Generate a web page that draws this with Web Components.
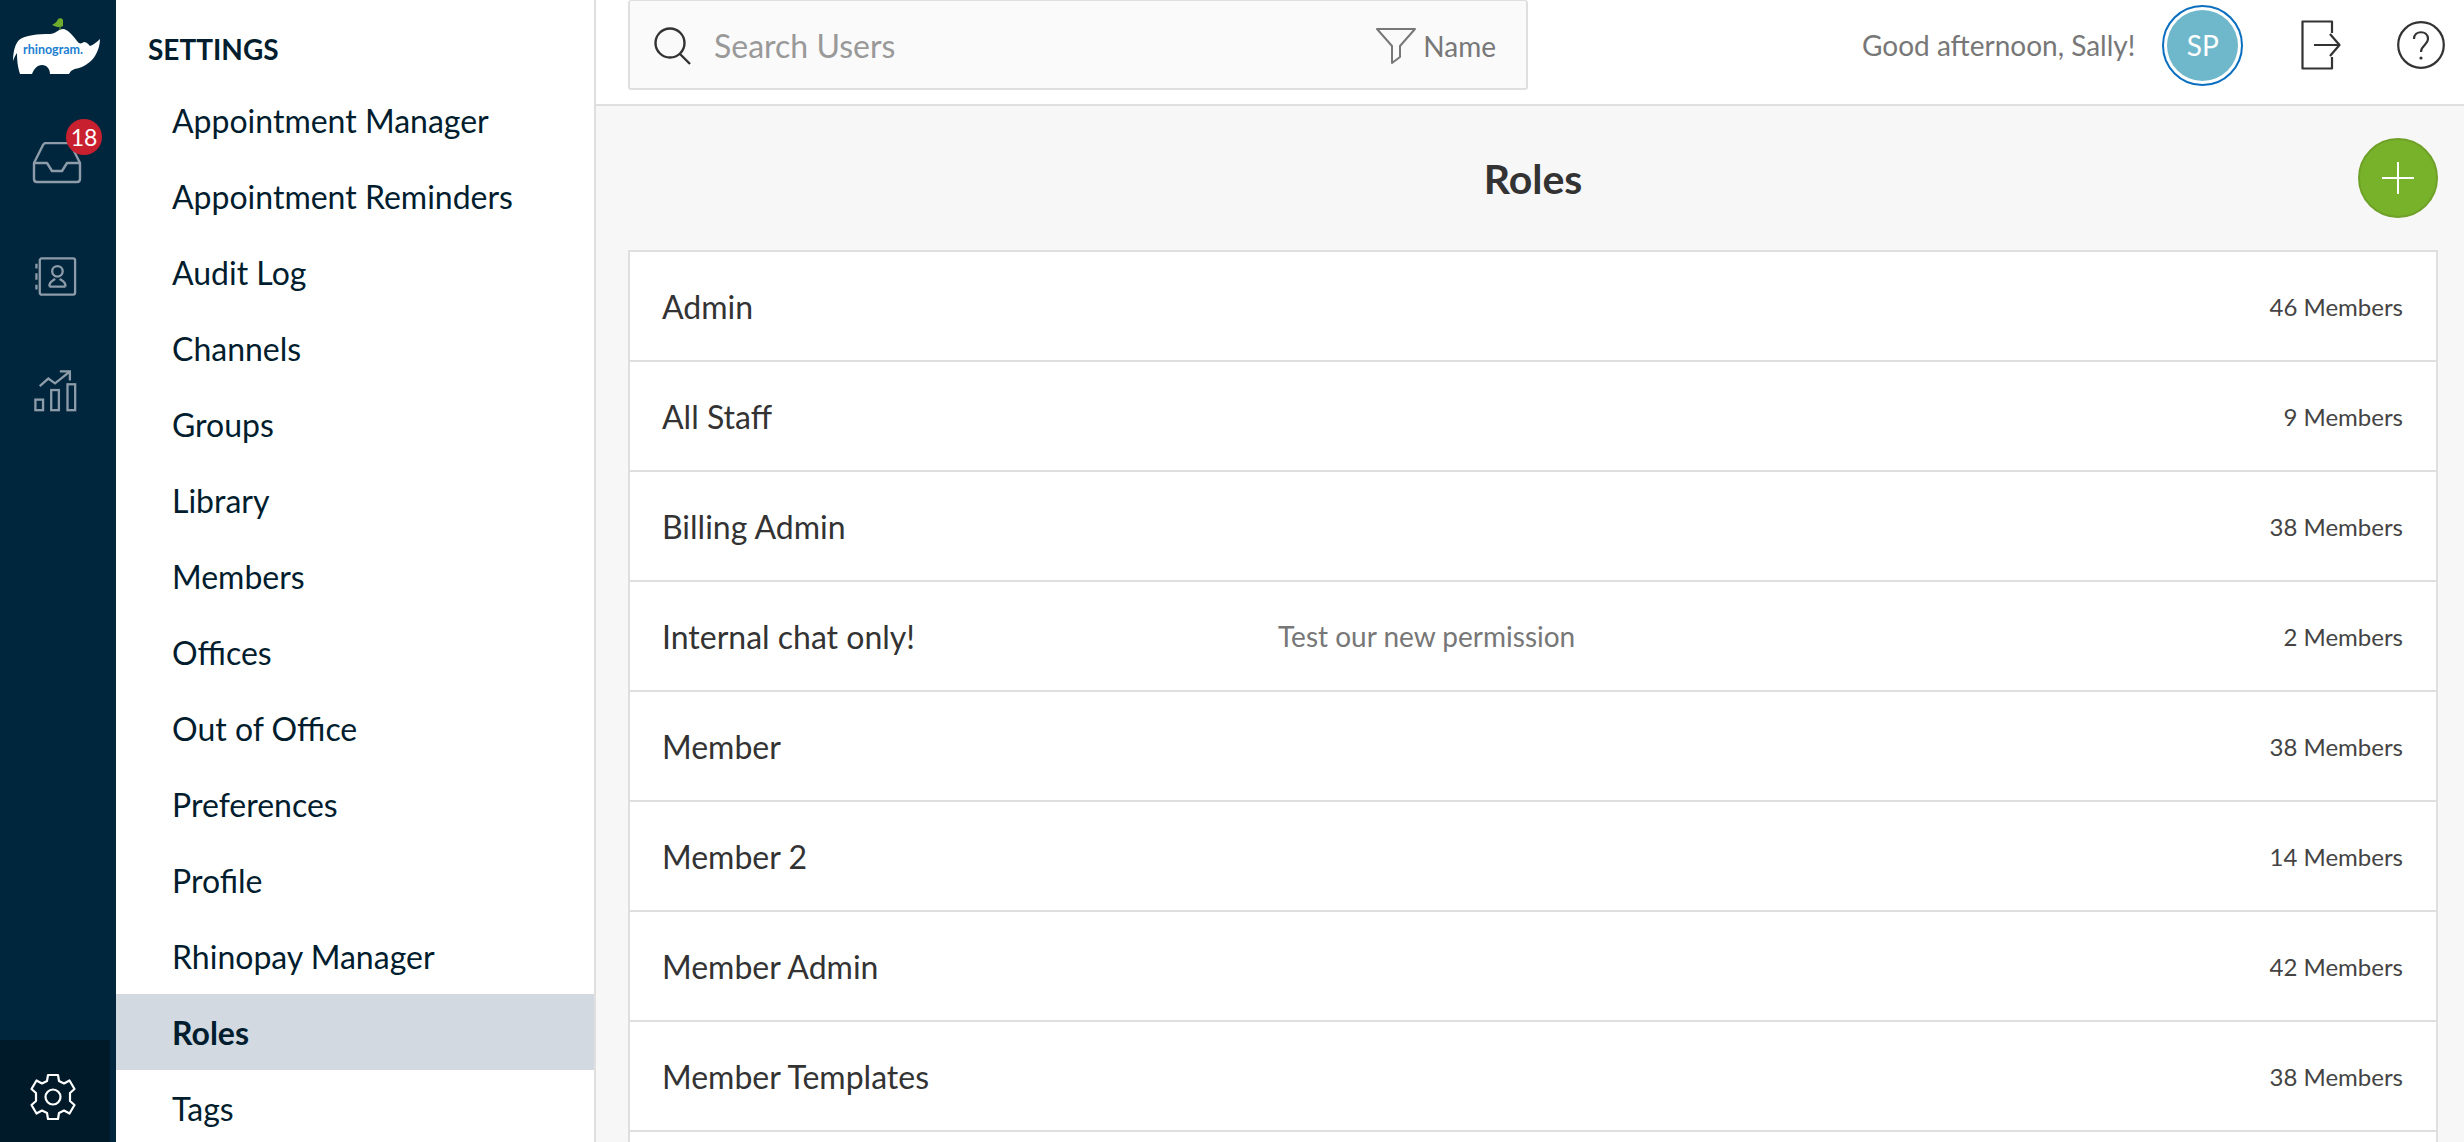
<!DOCTYPE html>
<html>
<head>
<meta charset="utf-8">
<style>
  html, body { margin: 0; height: 100%; overflow: hidden; }
  body { font-family: Lato, "Open Sans", sans-serif; }
</style>
</head>
<body>
<rh-app>
  <rh-rail slot="rail"></rh-rail>
  <rh-settings-nav slot="nav" heading="SETTINGS">
    <rh-nav-item>Appointment Manager</rh-nav-item>
    <rh-nav-item>Appointment Reminders</rh-nav-item>
    <rh-nav-item>Audit Log</rh-nav-item>
    <rh-nav-item>Channels</rh-nav-item>
    <rh-nav-item>Groups</rh-nav-item>
    <rh-nav-item>Library</rh-nav-item>
    <rh-nav-item>Members</rh-nav-item>
    <rh-nav-item>Offices</rh-nav-item>
    <rh-nav-item>Out of Office</rh-nav-item>
    <rh-nav-item>Preferences</rh-nav-item>
    <rh-nav-item>Profile</rh-nav-item>
    <rh-nav-item>Rhinopay Manager</rh-nav-item>
    <rh-nav-item active>Roles</rh-nav-item>
    <rh-nav-item>Tags</rh-nav-item>
  </rh-settings-nav>
  <rh-topbar slot="top"></rh-topbar>
  <rh-roles slot="main">
    <rh-role-row members="46 Members">Admin</rh-role-row>
    <rh-role-row members="9 Members">All Staff</rh-role-row>
    <rh-role-row members="38 Members">Billing Admin</rh-role-row>
    <rh-role-row members="2 Members" note="Test our new permission">Internal chat only!</rh-role-row>
    <rh-role-row members="38 Members">Member</rh-role-row>
    <rh-role-row members="14 Members">Member 2</rh-role-row>
    <rh-role-row members="42 Members">Member Admin</rh-role-row>
    <rh-role-row members="38 Members">Member Templates</rh-role-row>
    <rh-role-row></rh-role-row>
  </rh-roles>
</rh-app>

<script>
class RhApp extends HTMLElement {
    constructor() {
        super();
        this._root = this.attachShadow({ mode: "open" });
        this._root.innerHTML = `
            <style>
                :host {
                    display: grid;
                    grid-template-columns: 116px 480px 1fr;
                    grid-template-rows: 106px 1fr;
                    height: 1142px;
                    overflow: hidden;
                }
                .rail { grid-row: 1 / 3; min-height: 0; display: flex; }
                .nav { grid-row: 1 / 3; min-height: 0; display: flex; }
                .main { min-height: 0; display: flex; }
            </style>
            <div class="rail"><slot name="rail"></slot></div>
            <div class="nav"><slot name="nav"></slot></div>
            <div><slot name="top"></slot></div>
            <div class="main"><slot name="main"></slot></div>
        `;
    }
}

class RhRail extends HTMLElement {
    constructor() {
        super();
        this._root = this.attachShadow({ mode: "open" });
        this._root.innerHTML = `
            <style>
                :host {
                    display: flex;
                    flex-direction: column;
                    width: 116px;
                    background: #00263e;
                    color: #8d9ca8;
                }
                .logo { position: relative; height: 90px; flex: none; }
                .logo svg { display: block; }
                .logo span {
                    position: absolute;
                    left: 23px;
                    top: 41px;
                    font: 700 12.5px/18px Lato, sans-serif;
                    color: #1c7fd0;
                }
                .items { flex: 1; display: flex; flex-direction: column; align-items: flex-start; }
                .item { position: relative; display: block; height: 50px; margin-left: 32px; }
                .inbox { margin-top: 52px; }
                .contacts { margin-top: 64px; margin-left: 35px; }
                .stats { margin-top: 63px; margin-left: 33px; }
                .badge {
                    position: absolute;
                    left: 34px;
                    top: -23px;
                    width: 36px;
                    height: 36px;
                    border-radius: 50%;
                    background: #c8202f;
                    color: #fff;
                    font-size: 23px;
                    line-height: 36px;
                    text-align: center;
                }
                .gear {
                    flex: none;
                    width: 110px;
                    height: 102px;
                    background: #001a29;
                    display: flex;
                    align-items: center;
                    justify-content: center;
                    padding: 12px 4px 0 0;
                    box-sizing: border-box;
                    color: #fff;
                }
            </style>
            <div class="logo">
                <svg width="116" height="90" viewBox="0 0 116 90">
                    <path fill="#fff" d="M13 61 C13 52 15 44 19 40 C25 35 38 34 50 34 C55 34 59 29 63 29 C67 29 72 34 77 41 C79 44 81 44 84 42 C87 42 89 45 90 46 C93 45 97 42 100 39 C100 45 98 51 95 56 C91 62 85 66 79 68 C74 69 71 70 69 74 L50 74 C50 69 47 65 42 65 C37 65 34 69 32 74 L20 74 C18 68 17 62 17 53 C15 56 14 58 13 61 Z"/>
                    <path fill="#6fae2c" d="M52 25 C55 23 57 22 58 19 C60 18 62 18 63 20 L63 26 C60 28 56 27 52 25 Z"/>
                    <path stroke="#6fae2c" stroke-width="1" d="M60 27 L60 30"/>
                </svg>
                <span>rhinogram.</span>
            </div>
            <div class="items">
                <div class="item inbox">
                    <svg width="50" height="42" viewBox="0 0 50 42" fill="none" stroke="currentColor" stroke-width="2.4" stroke-linejoin="round">
                        <path d="M2 21 L11 3 Q12 1 14 1 L36 1 Q38 1 39 3 L48 21"/>
                        <path d="M2 21 L2 37 Q2 40 5 40 L45 40 Q48 40 48 37 L48 21 L35 21 L30 29 L20 29 L15 21 Z"/>
                    </svg>
                    <span class="badge">18</span>
                </div>
                <div class="item contacts">
                    <svg width="42" height="42" viewBox="0 0 44 42" fill="none" stroke="currentColor" stroke-width="2.4" stroke-linejoin="round">
                        <rect x="5" y="1.5" width="37" height="38" rx="2"/>
                        <path d="M1.5 7 V12 M1.5 17 V24 M1.5 29 V34"/>
                        <circle cx="23.5" cy="15" r="5.5"/>
                        <path d="M15 31 C15 25 19 25 21 23 M32 31 C32 25 28 25 26 23 M15 31 H32"/>
                    </svg>
                </div>
                <div class="item stats">
                    <svg width="46" height="44" viewBox="0 0 48 44" fill="none" stroke="currentColor" stroke-width="2.4">
                        <rect x="2.5" y="31" width="8" height="11"/>
                        <rect x="19" y="21" width="8" height="21"/>
                        <rect x="36" y="15" width="8" height="27"/>
                        <path d="M7 17 L16 9 L23 14 L38 2 M28 1.5 H38.5 V11"/>
                    </svg>
                </div>
            </div>
            <div class="gear">
                <svg width="48" height="48" viewBox="0 0 48 48" fill="none" stroke="currentColor" stroke-width="2.2" stroke-linejoin="round">
                    <path d="M19 2 H29 L30 8 L35 10.5 L40.5 7.5 L45.5 16 L41 20 V28 L45.5 32 L40.5 40.5 L35 37.5 L30 40 L29 46 H19 L18 40 L13 37.5 L7.5 40.5 L2.5 32 L7 28 V20 L2.5 16 L7.5 7.5 L13 10.5 L18 8 Z"/>
                    <circle cx="24" cy="24" r="7.5"/>
                </svg>
            </div>
        `;
    }
}

class RhSettingsNav extends HTMLElement {
    constructor() {
        super();
        this._root = this.attachShadow({ mode: "open" });
        this._root.innerHTML = `
            <style>
                :host {
                    display: block;
                    flex: 1;
                    background: #fff;
                    border-right: 2px solid #dfdfdf;
                    overflow: hidden;
                    color: #011d2e;
                }
                h2 {
                    margin: 0;
                    height: 82px;
                    padding: 32px 0 0 32px;
                    box-sizing: border-box;
                    font-size: 28px;
                    line-height: 34px;
                    font-weight: 700;
                }
            </style>
            <h2></h2>
            <slot></slot>
        `;
    }
    connectedCallback() {
        this._root.querySelector("h2").textContent = this.getAttribute("heading");
    }
}

class RhNavItem extends HTMLElement {
    constructor() {
        super();
        this._root = this.attachShadow({ mode: "open" });
        this._root.innerHTML = `
            <style>
                :host {
                    display: flex;
                    align-items: center;
                    height: 76px;
                    padding-left: 56px;
                    font-size: 32px;
                }
                :host([active]) {
                    background: #d2d9e0;
                    font-weight: 700;
                }
            </style>
            <slot></slot>
        `;
    }
}

class RhTopbar extends HTMLElement {
    constructor() {
        super();
        this._root = this.attachShadow({ mode: "open" });
        this._root.innerHTML = `
            <style>
                :host {
                    display: flex;
                    align-items: flex-start;
                    box-sizing: border-box;
                    height: 106px;
                    background: #fff;
                    border-bottom: 2px solid #dfdfdf;
                    padding-left: 32px;
                }
                .search {
                    display: flex;
                    align-items: center;
                    box-sizing: border-box;
                    width: 900px;
                    height: 90px;
                    background: #fafafa;
                    border: 2px solid #dfdfdf;
                    border-top-width: 1px;
                    border-radius: 3px;
                    padding: 2px 30px 0 24px;
                }
                .search .ph { margin-left: 22px; flex: 1; font-size: 32px; color: #999; }
                .search .by { margin-left: 7px; font-size: 28px; color: #777; }
                .user {
                    flex: 1;
                    display: flex;
                    align-items: center;
                    height: 90px;
                    padding-left: 334px;
                }
                .hello { font-size: 28px; color: #777; white-space: nowrap; }
                .avatar {
                    flex: none;
                    width: 81px;
                    height: 81px;
                    box-sizing: border-box;
                    margin: 0 0 0 27px;
                    border-radius: 50%;
                    border: 2px solid #0b6fc0;
                    padding: 3px;
                    background: #fff;
                }
                .avatar div {
                    height: 100%;
                    border-radius: 50%;
                    background: #6fb8cc;
                    color: #fff;
                    font-size: 28px;
                    display: flex;
                    align-items: center;
                    justify-content: center;
                }
                .exit { margin-left: 58px; flex: none; }
                .help { margin-left: 56px; flex: none; }
            </style>
            <div class="search">
                <svg width="38" height="38" viewBox="0 0 38 38" fill="none" stroke="#333" stroke-width="2.4">
                    <circle cx="16" cy="16" r="14.5"/>
                    <path d="M26 27 L36 37"/>
                </svg>
                <span class="ph">Search Users</span>
                <svg width="40" height="36" viewBox="0 0 40 36" fill="none" stroke="#777" stroke-width="2" stroke-linejoin="round">
                    <path d="M1 1 H39 L24 18 V29 L16 35 V18 Z"/>
                </svg>
                <span class="by">Name</span>
            </div>
            <div class="user">
                <span class="hello">Good afternoon, Sally!</span>
                <div class="avatar"><div>SP</div></div>
                <svg class="exit" width="40" height="50" viewBox="0 0 40 50" fill="none" stroke="#333" stroke-width="2.2" stroke-linejoin="round">
                    <path d="M31 13 V1.5 H1.5 V48.5 H31 V37"/>
                    <path d="M13 25 H38 M29 14 L38.5 25 L29 36"/>
                </svg>
                <svg class="help" width="48" height="48" viewBox="0 0 48 48" fill="none" stroke="#333" stroke-width="2.2">
                    <circle cx="24" cy="24" r="22.8"/>
                    <path d="M17 18 C17 9 31 9 31 18 C31 24 24 24 24 31"/>
                    <circle cx="24" cy="37" r="1.6" fill="#333" stroke="none"/>
                </svg>
            </div>
        `;
    }
}

class RhRoles extends HTMLElement {
    constructor() {
        super();
        this._root = this.attachShadow({ mode: "open" });
        this._root.innerHTML = `
            <style>
                :host {
                    display: block;
                    flex: 1;
                    background: #f7f7f7;
                    padding: 0 26px 0 32px;
                    overflow: hidden;
                }
                .head {
                    display: grid;
                    grid-template-columns: 80px 1fr 80px;
                    align-items: center;
                    height: 144px;
                }
                h1 {
                    grid-column: 2;
                    margin: 0;
                    text-align: center;
                    font-size: 41px;
                    font-weight: 700;
                    color: #333;
                }
                .add {
                    grid-column: 3;
                    width: 80px;
                    height: 80px;
                    box-sizing: border-box;
                    border-radius: 50%;
                    background: #78b22a;
                    border: 2px solid #6fa128;
                    display: flex;
                    align-items: center;
                    justify-content: center;
                }
                .list {
                    border: 2px solid #dfdfdf;
                    border-bottom: 0;
                    background: #fff;
                }
            </style>
            <div class="head">
                <h1>Roles</h1>
                <div class="add">
                    <svg width="32" height="32" viewBox="0 0 32 32" stroke="#fff" stroke-width="2"><path d="M16 0 V32 M0 16 H32"/></svg>
                </div>
            </div>
            <div class="list"><slot></slot></div>
        `;
    }
}

class RhRoleRow extends HTMLElement {
    constructor() {
        super();
        this._root = this.attachShadow({ mode: "open" });
        this._root.innerHTML = `
            <style>
                :host {
                    display: grid;
                    grid-template-columns: 616px 1fr auto;
                    align-items: center;
                    box-sizing: border-box;
                    height: 110px;
                    padding: 0 33px 0 32px;
                    border-bottom: 2px solid #dfdfdf;
                    color: #333;
                    font-size: 32px;
                }
                .note { font-size: 28px; color: #777; }
                .count { font-size: 24px; color: #444; }
            </style>
            <div><slot></slot></div>
            <div class="note"></div>
            <div class="count"></div>
        `;
    }
    connectedCallback() {
        this._root.querySelector(".note").textContent = this.getAttribute("note") || "";
        this._root.querySelector(".count").textContent = this.getAttribute("members") || "";
    }
}

customElements.define("rh-app", RhApp);
customElements.define("rh-rail", RhRail);
customElements.define("rh-settings-nav", RhSettingsNav);
customElements.define("rh-nav-item", RhNavItem);
customElements.define("rh-topbar", RhTopbar);
customElements.define("rh-roles", RhRoles);
customElements.define("rh-role-row", RhRoleRow);
</script>
</body>
</html>
